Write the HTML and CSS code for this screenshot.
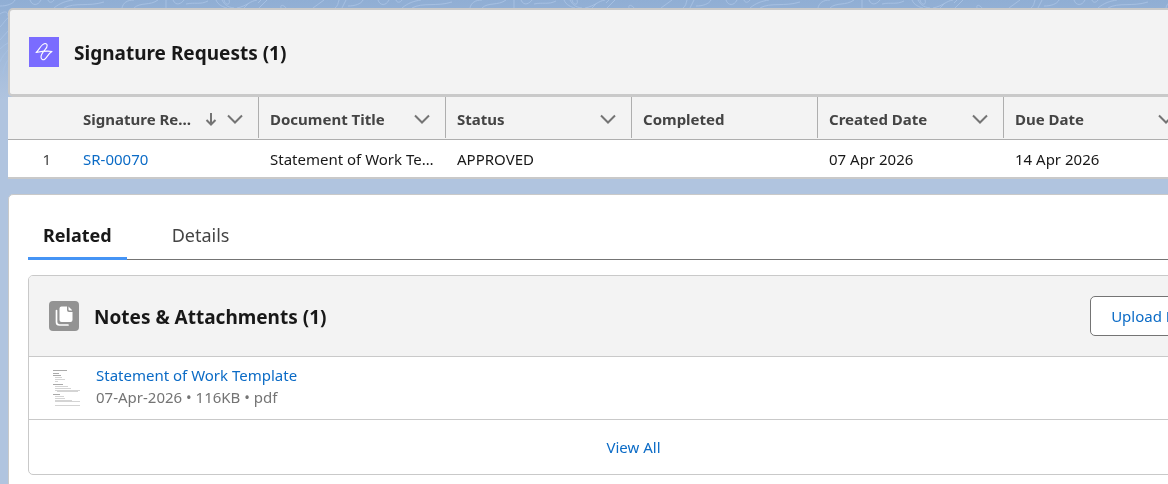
FILE: index.html
```html
<!DOCTYPE html>
<html lang="en">
    <head>
        <meta charset="utf-8">
        <title>Signature Requests</title>
        <link rel="stylesheet" href="styles.css">
    </head>
    <body>
        <svg class="pageBG" aria-hidden="true">
            <defs>
                <linearGradient id="fade" x1="0" y1="0" x2="0" y2="1">
                    <stop offset="0" stop-color="#90aed4"/>
                    <stop offset="1" stop-color="#b0c4df"/>
                </linearGradient>
                <pattern id="topo" width="348" height="100" patternUnits="userSpaceOnUse">
                    <path d="M30 0 C32 6 38 6 41 0 M48 0 C49 3 52 3 54 0 M54 8 C60 3 66 1 73 0 M64 8 C75 2 88 7 104 2 M122 8 C123 3 127 0 134 0 M134 8 C140 2 150 6 158 0 M166 0 V8 M173 0 C176 7 182 3 184 0 M186 4 C195 2 200 5 208 1 M216 0 C218 5 223 7 227 8 M222 0 C225 5 227 7 234 8 M224 0 C226 7 231 4 229 0 M237 8 C247 6 250 1 257 0 M244 8 L249 3 M258 3 L261 0 M259 8 L267 0 M281 8 C280 4 284 5 286 8 M313 8 L324 0 M335 8 C338 6 338 3 339 0 M342 8 L346 0"/>
                    <path d="M0 6 C7 6 13 4 15 0 M0 14 C4 11 8 11 8 16 M0 27 C4 23 5 20 8 18 M0 40 L8 31 M0 49 C3 46 6 44 8 43 M0 62 C2 56 5 54 8 50 M3 74 C4 68 5 64 8 60"/>
                </pattern>
            </defs>
            <rect width="100%" height="100%" fill="url(#fade)"/>
            <rect width="100%" height="100%" fill="url(#topo)"/>
        </svg>
        <main class="record">
            <section class="requests">
                <header class="listHeader">
                    <svg class="appIcon" viewBox="0 0 30 30" aria-hidden="true">
                        <rect width="30" height="30" fill="#7a6cff"/>
                        <path d="M7 15.500 C10 13.500 12 7 16 6.500 C19 6.500 18.500 10 16.500 12 C14.500 14.500 12 17 12 20 C12 22.500 14 23.500 16 22 C18.500 20 19 16.500 23 14.500 C18 13.500 12 14.500 7 15.500 Z" fill="none" stroke="#fff" stroke-width="1.100" stroke-linejoin="round"/>
                    </svg>
                    <h2>Signature Requests (1)</h2>
                </header>
                <table class="grid">
                    <colgroup>
                        <col class="colNum">
                        <col class="colName" span="2">
                        <col class="colField" span="4">
                        <col>
                    </colgroup>
                    <thead>
                        <tr>
                            <th></th>
                            <th><div class="head"><span>Signature Request Name</span>
                                <svg class="sort" viewBox="0 0 12 14"><path d="M6 1 V12 M1.500 8 L6 12.500 L10.500 8"/></svg>
                                <svg class="chevron" viewBox="0 0 16 10"><path d="M1 1.500 L8 8.500 L15 1.500"/></svg></div></th>
                            <th><div class="head"><span>Document Title</span>
                                <svg class="chevron" viewBox="0 0 16 10"><path d="M1 1.500 L8 8.500 L15 1.500"/></svg></div></th>
                            <th><div class="head"><span>Status</span>
                                <svg class="chevron" viewBox="0 0 16 10"><path d="M1 1.500 L8 8.500 L15 1.500"/></svg></div></th>
                            <th><div class="head"><span>Completed</span></div></th>
                            <th><div class="head"><span>Created Date</span>
                                <svg class="chevron" viewBox="0 0 16 10"><path d="M1 1.500 L8 8.500 L15 1.500"/></svg></div></th>
                            <th><div class="head"><span>Due Date</span>
                                <svg class="chevron" viewBox="0 0 16 10"><path d="M1 1.500 L8 8.500 L15 1.500"/></svg></div></th>
                            <th></th>
                        </tr>
                    </thead>
                    <tbody>
                        <tr>
                            <td class="num">1</td>
                            <td><a href="#">SR-00070</a></td>
                            <td>Statement of Work Template</td>
                            <td>APPROVED</td>
                            <td></td>
                            <td>07 Apr 2026</td>
                            <td>14 Apr 2026</td>
                            <td></td>
                        </tr>
                    </tbody>
                </table>
            </section>

            <section class="details">
                <nav class="tabs">
                    <a class="tab active" href="#related">Related</a>
                    <a class="tab" href="#details">Details</a>
                </nav>
                <article class="card" id="related">
                    <header class="cardHeader">
                        <svg class="cardIcon" viewBox="0 0 30 30" aria-hidden="true">
                            <rect width="30" height="30" rx="4" fill="#939393"/>
                            <path d="M7.500 9.500 V21 Q7.500 24 10.500 24 H19" fill="none" stroke="#fff" stroke-width="1.700" stroke-linecap="round"/>
                            <path d="M12.500 5.500 H18 V9 Q18 11 20 11 H23.500 V19 Q23.500 21 21.500 21 H12.500 Q10.500 21 10.500 19 V7.500 Q10.500 5.500 12.500 5.500 Z M19.500 5.500 L23 9 V9.500 H20.500 Q19.500 9.500 19.500 8.500 Z" fill="#fff"/>
                        </svg>
                        <h2>Notes &amp; Attachments (1)</h2>
                        <button type="button">Upload Files</button>
                    </header>
                    <div class="file">
                        <svg class="thumb" viewBox="0 0 32 40" aria-hidden="true">
                            <rect width="32" height="40" fill="#fff"/>
                            <path d="M1 1.500 H15 M1 4.500 H7 M1 6.500 H9 M1 15.500 H11 M1 25.500 H8" stroke="#aaa"/>
                            <path d="M3 8.500 H10 M3 10.500 H13 M3 12.500 H6 M3 17.500 H16 M3 19.500 H19 M3 21.500 H28 M5 22.500 H26 M3 27.500 H12 M3 29.500 H13 M3 31.500 H20 M3 32.500 H28 M3 36.500 H28" stroke="#d4d4d4"/>
                        </svg>
                        <div>
                            <a href="#">Statement of Work Template</a>
                            <p>07-Apr-2026 • 116KB • pdf</p>
                        </div>
                    </div>
                    <footer><a href="#">View All</a></footer>
                </article>
            </section>
        </main>
    </body>
</html>
```
FILE: styles.css
```css
* {
    box-sizing: border-box;
}

body {
    margin: 0;
    overflow: hidden;
    background-color: #b0c4df;
    color: #181818;
    font: 15px/22px "Segoe UI", "Noto Sans", sans-serif;
}

a {
    color: #0b6bc6;
    text-decoration: none;
}

h2 {
    margin: 0;
    padding-top: 2px;
    font-size: 19px;
    line-height: 26px;
    font-weight: 700;
}

.pageBG {
    position: fixed;
    top: 0;
    left: 0;
    width: 100%;
    height: 100px;
    z-index: -1;
}

.pageBG path {
    fill: none;
    stroke: #a6c0e2;
}

/* the record runs on past the right edge of the window */
.record {
    margin: 8px -92px 0 8px;
}

.listHeader {
    display: flex;
    align-items: center;
    gap: 15px;
    height: 89px;
    padding: 0 19px;
    border: 2px solid #c9c9c9;
    border-bottom-width: 3px;
    border-radius: 5px;
    background-color: #f3f3f3;
}

.appIcon,
.cardIcon {
    flex: none;
    width: 30px;
    height: 30px;
}

.grid {
    width: 100%;
    table-layout: fixed;
    border-collapse: separate;
    border-spacing: 0;
    border-bottom: 2px solid #c9c9c9;
    background-color: #fff;
}

.colNum {
    width: 64px;
}

.colName {
    width: 187px;
}

.colField {
    width: 186px;
}

th,
td {
    padding: 0 9px 0 11px;
    text-align: left;
    white-space: nowrap;
    overflow: hidden;
    text-overflow: ellipsis;
}

th {
    height: 43px;
    padding: 0;
    border-bottom: 1px solid #aeaeae;
    background-color: #f3f3f3;
    color: #444;
    font-weight: 700;
}

td {
    height: 37px;
}

.head {
    display: flex;
    align-items: center;
    height: 41px;
    margin-bottom: 1px;
    padding: 2px 15px 0 11px;
    border-right: 1px solid #aeaeae;
}

.head span {
    flex: 1;
    overflow: hidden;
    text-overflow: ellipsis;
}

.head svg {
    flex: none;
    fill: none;
    stroke: #747474;
    stroke-width: 2;
}

.head .sort {
    width: 12px;
    height: 14px;
    margin: 0 10px 0 8px;
}

.chevron {
    width: 16px;
    height: 10px;
}

.num {
    padding-right: 21px;
    color: #444;
    text-align: right;
}

.details {
    margin-top: 15px;
    padding: 18px 20px 18px 19px;
    border: 1px solid #c9c9c9;
    border-radius: 5px;
    background-color: #fff;
}

.tabs {
    display: flex;
    gap: 30px;
    margin-bottom: 15px;
    border-bottom: 1px solid #747474;
}

.tab {
    margin-bottom: -1px;
    padding: 8px 15px;
    border-bottom: 3px solid transparent;
    color: #444;
    font-size: 18px;
    line-height: 28px;
}

.tab.active {
    border-color: #4594f5;
    color: #181818;
    font-weight: 700;
}

.card {
    border: 1px solid #c9c9c9;
    border-radius: 5px;
    overflow: hidden;
}

.cardHeader {
    display: flex;
    align-items: center;
    gap: 15px;
    height: 81px;
    padding: 0 20px;
    border-bottom: 1px solid #c9c9c9;
    background-color: #f3f3f3;
}

.cardHeader button {
    height: 40px;
    margin-left: auto;
    padding: 0 20px;
    border: 1px solid #747474;
    border-radius: 5px;
    background-color: #fff;
    color: #0b6bc6;
    font: inherit;
}

.file {
    display: flex;
    gap: 12px;
    height: 63px;
    padding: 7px 23px;
    border-bottom: 1px solid #c9c9c9;
}

.thumb {
    width: 32px;
    height: 40px;
    margin-top: 5px;
}

.file p {
    margin: 0;
    color: #747474;
}

.card footer {
    padding: 16px;
    text-align: center;
}
```
